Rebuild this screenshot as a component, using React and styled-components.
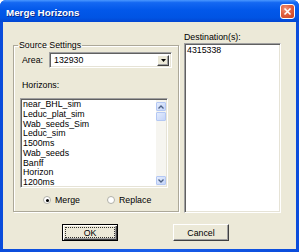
import React from 'react';
import styled, { createGlobalStyle } from 'styled-components';

const Global = createGlobalStyle`
  html, body { margin: 0; padding: 0; background: #ffffff; }
  body { font-family: "Liberation Sans", Arial, sans-serif; }
  * { box-sizing: border-box; }
`;

const FS = '8.8px';

const Window = styled.div`
  width: 299px;
  height: 252px;
  display: flex;
  flex-direction: column;
  background: linear-gradient(to right, #0A4CDB, #1A5EEA 50%, #0A4CDB);
  border-radius: 6px 6px 0 0;
  overflow: hidden;
`;

const TitleBar = styled.div`
  height: 22px;
  flex: none;
  display: flex;
  align-items: flex-start;
  justify-content: space-between;
  padding: 4px 4px 0 6px;
  background: linear-gradient(to bottom, #4A98FF 0%, #1468F2 12%, #0258EA 45%, #0054E4 80%, #0346D2 100%);
`;

const Title = styled.span`
  margin-top: 1px;
  color: #ffffff;
  font-weight: bold;
  font-size: 9.8px;
  line-height: 15px;
  text-shadow: 1px 1px 0 #0A2A8A;
`;

const CloseButton = styled.div`
  width: 15px;
  height: 15px;
  border: 1px solid #ffffff;
  border-radius: 3px;
  background: radial-gradient(circle at 35% 30%, #F0957A 0%, #E06040 45%, #C8401E 100%);
  display: flex;
  align-items: center;
  justify-content: center;
`;

const Body = styled.div`
  flex: 1;
  margin: 0 3px 3px;
  background: #ECE9D8;
  display: flex;
  flex-direction: column;
  padding: 10px 0 0 10px;
`;

const Columns = styled.div`
  display: flex;
  gap: 5px;
  align-items: flex-start;
`;

const GroupBox = styled.fieldset`
  margin: 8px 0 0 0;
  width: 166px;
  min-width: 0;
  padding: 2px 0 5px 6px;
  border: 1px solid #ACA899;
  box-shadow: inset 1px 1px 0 #ffffff, 1px 1px 0 #ffffff;
  display: flex;
  flex-direction: column;
`;

const GroupLegend = styled.legend`
  margin-left: -2px;
  padding: 0 1px;
  font-size: ${FS};
  line-height: 10px;
  color: #000;
`;

const Label = styled.div`
  font-size: ${FS};
  line-height: 10px;
  color: #000;
  margin: ${p => p.$mt || 0}px 0 0 ${p => p.$ml || 0}px;
`;

const Row = styled.div`
  display: flex;
  align-items: center;
`;

const FieldLabel = styled.span`
  width: 29px;
  padding-left: 2px;
  font-size: ${FS};
  color: #000;
`;

const sunken = `
  background: #ffffff;
  border: 1px solid;
  border-color: #A0A0A0 #ffffff #ffffff #A0A0A0;
  box-shadow: inset 1px 1px 0 #606060, inset -1px -1px 0 #E6E3D6;
`;

const Combo = styled.div`
  ${sunken}
  width: 123px;
  height: 16px;
  display: flex;
  align-items: center;
  padding: 2px 2px 2px 4px;
`;

const ComboText = styled.span`
  flex: 1;
  font-size: ${FS};
  color: #000;
`;

const DropButton = styled.div`
  width: 12px;
  height: 11px;
  background: #ECE9D8;
  border: 1px solid;
  border-color: #ffffff #404040 #404040 #ffffff;
  box-shadow: inset -1px -1px 0 #A0A0A0;
  display: flex;
  align-items: center;
  justify-content: center;
`;

const ListBox = styled.div`
  ${sunken}
  width: ${p => p.$w}px;
  height: ${p => p.$h}px;
  margin-top: ${p => p.$mt || 0}px;
  display: flex;
  padding: 1px;
`;

const Items = styled.div`
  flex: 1;
  display: flex;
  flex-direction: column;
  padding: 0 0 0 1px;
`;

const Item = styled.div`
  font-size: ${FS};
  line-height: 9.75px;
  color: #000;
  white-space: nowrap;
`;

const ScrollBar = styled.div`
  width: 10px;
  display: flex;
  flex-direction: column;
  gap: 1px;
  padding: 2px 0 1px;
  background: #F6F5F0;
`;

const ScrollButton = styled.div`
  width: 10px;
  height: 9px;
  flex: none;
  border: 1px solid #B4C8F4;
  border-radius: 1px;
  background: linear-gradient(to bottom right, #E4ECFD, #C4D4F8);
  display: flex;
  align-items: center;
  justify-content: center;
`;

const Track = styled.div`
  flex: 1;
`;

const RadioRow = styled.div`
  display: flex;
  align-items: center;
  margin-top: 6px;
  height: 12px;
  padding-left: 23px;
`;

const RadioOption = styled.div`
  display: flex;
  align-items: center;
  gap: 4px;
  width: ${p => p.$w}px;
  font-size: ${FS};
  color: #000;
`;

const RadioCircle = styled.div`
  width: 8px;
  height: 8px;
  border-radius: 50%;
  border: 1px solid #B0B0A8;
  background: #ffffff;
  display: flex;
  align-items: center;
  justify-content: center;
  &::after {
    content: '';
    display: ${p => (p.$on ? 'block' : 'none')};
    width: 3px;
    height: 3px;
    border-radius: 50%;
    background: #000;
  }
`;

const RightColumn = styled.div`
  width: 97px;
  display: flex;
  flex-direction: column;
`;

const DestText = styled.div`
  font-size: ${FS};
  line-height: 9.75px;
  color: #000;
  padding: 1px 0 0 1px;
`;

const ButtonRow = styled.div`
  display: flex;
  gap: 55px;
  margin-top: 11px;
  padding-left: 49px;
`;

const Button = styled.div`
  width: 56px;
  height: 17px;
  background: #ECE9D8;
  border: 1px solid;
  border-color: ${p => (p.$default ? '#000000' : '#ffffff #404040 #404040 #ffffff')};
  box-shadow: ${p => (p.$default
    ? 'inset 1px 1px 0 #ffffff, inset -1px -1px 0 #404040, inset -2px -2px 0 #A0A0A0'
    : 'inset -1px -1px 0 #A0A0A0')};
  display: flex;
  align-items: center;
  justify-content: center;
  padding: 2px;
  font-size: ${FS};
  color: #000;
`;

const Focus = styled.div`
  flex: 1;
  align-self: stretch;
  border: 1px dotted #303030;
  display: flex;
  align-items: center;
  justify-content: center;
`;

const Chevron = ({ up }) => (
  <svg width="6" height="4" viewBox="0 0 6 4">
    <polyline
      points={up ? '0.5,3.5 3,1 5.5,3.5' : '0.5,0.5 3,3 5.5,0.5'}
      fill="none"
      stroke="#4D6185"
      strokeWidth="1.3"
    />
  </svg>
);

const horizons = [
  'near_BHL_sim',
  'Leduc_plat_sim',
  'Wab_seeds_Sim',
  'Leduc_sim',
  '1500ms',
  'Wab_seeds',
  'Banff',
  'Horizon',
  '1200ms',
];

export default function App() {
  return (
    <>
      <Global />
      <Window>
        <TitleBar>
          <Title>Merge Horizons</Title>
          <CloseButton>
            <svg width="9" height="9" viewBox="0 0 9 9">
              <path d="M1.5 1.5 L7.5 7.5 M7.5 1.5 L1.5 7.5" stroke="#fff" strokeWidth="1.6" />
            </svg>
          </CloseButton>
        </TitleBar>
        <Body>
          <Columns>
            <GroupBox>
              <GroupLegend>Source Settings</GroupLegend>
              <Row>
                <FieldLabel>Area:</FieldLabel>
                <Combo>
                  <ComboText>132930</ComboText>
                  <DropButton>
                    <svg width="5" height="3" viewBox="0 0 5 3">
                      <polygon points="0,0 5,0 2.5,3" fill="#000" />
                    </svg>
                  </DropButton>
                </Combo>
              </Row>
              <Label $mt={12} $ml={2}>Horizons:</Label>
              <ListBox $w={148} $h={90} $mt={8}>
                <Items>
                  {horizons.map(h => (
                    <Item key={h}>{h}</Item>
                  ))}
                </Items>
                <ScrollBar>
                  <ScrollButton><Chevron up /></ScrollButton>
                  <ScrollButton />
                  <Track />
                  <ScrollButton><Chevron /></ScrollButton>
                </ScrollBar>
              </ListBox>
              <RadioRow>
                <RadioOption $w={64}>
                  <RadioCircle $on />
                  Merge
                </RadioOption>
                <RadioOption $w={60}>
                  <RadioCircle />
                  Replace
                </RadioOption>
              </RadioRow>
            </GroupBox>
            <RightColumn>
              <Label>Destination(s):</Label>
              <ListBox $w={97} $h={170} $mt={1}>
                <DestText>4315338</DestText>
              </ListBox>
            </RightColumn>
          </Columns>
          <ButtonRow>
            <Button $default>
              <Focus>OK</Focus>
            </Button>
            <Button>Cancel</Button>
          </ButtonRow>
        </Body>
      </Window>
    </>
  );
}
